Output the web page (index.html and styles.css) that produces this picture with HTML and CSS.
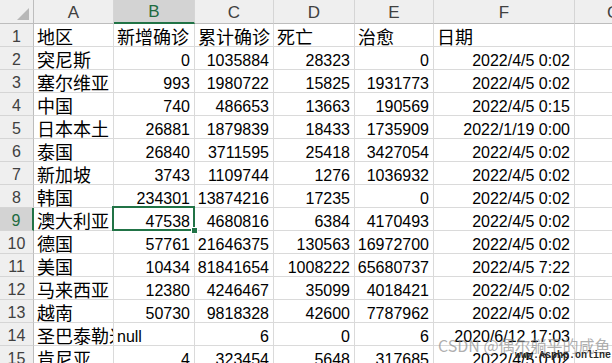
FILE: index.html
```html
<!DOCTYPE html>
<html lang="zh">
<head>
<meta charset="utf-8">
<link rel="stylesheet" href="styles.css">
</head>
<body>
<div class="wrap">
<div class="sheet">
  <div class="corner"><svg width="33" height="23" viewBox="0 0 33 23"><polygon points="29,8 29,20 17,20" fill="#b8b8b8"/></svg></div>
  <div class="ch">A</div><div class="ch ch-sel">B</div><div class="ch">C</div><div class="ch">D</div><div class="ch">E</div><div class="ch">F</div><div class="ch">G</div>

  <div class="rh">1</div><div class="c t">地区</div><div class="c t">新增确诊</div><div class="c t">累计确诊</div><div class="c t">死亡</div><div class="c t">治愈</div><div class="c t">日期</div><div class="c"></div>
  <div class="rh">2</div><div class="c t">突尼斯</div><div class="c n">0</div><div class="c n">1035884</div><div class="c n">28323</div><div class="c n">0</div><div class="c n">2022/4/5 0:02</div><div class="c"></div>
  <div class="rh">3</div><div class="c t">塞尔维亚</div><div class="c n">993</div><div class="c n">1980722</div><div class="c n">15825</div><div class="c n">1931773</div><div class="c n">2022/4/5 0:02</div><div class="c"></div>
  <div class="rh">4</div><div class="c t">中国</div><div class="c n">740</div><div class="c n">486653</div><div class="c n">13663</div><div class="c n">190569</div><div class="c n">2022/4/5 0:15</div><div class="c"></div>
  <div class="rh">5</div><div class="c t">日本本土</div><div class="c n">26881</div><div class="c n">1879839</div><div class="c n">18433</div><div class="c n">1735909</div><div class="c n">2022/1/19 0:00</div><div class="c"></div>
  <div class="rh">6</div><div class="c t">泰国</div><div class="c n">26840</div><div class="c n">3711595</div><div class="c n">25418</div><div class="c n">3427054</div><div class="c n">2022/4/5 0:02</div><div class="c"></div>
  <div class="rh">7</div><div class="c t">新加坡</div><div class="c n">3743</div><div class="c n">1109744</div><div class="c n">1276</div><div class="c n">1036932</div><div class="c n">2022/4/5 0:02</div><div class="c"></div>
  <div class="rh">8</div><div class="c t">韩国</div><div class="c n">234301</div><div class="c n">13874216</div><div class="c n">17235</div><div class="c n">0</div><div class="c n">2022/4/5 0:02</div><div class="c"></div>
  <div class="rh rh-sel">9</div><div class="c t">澳大利亚</div><div class="c n sel">47538</div><div class="c n">4680816</div><div class="c n">6384</div><div class="c n">4170493</div><div class="c n">2022/4/5 0:02</div><div class="c"></div>
  <div class="rh">10</div><div class="c t">德国</div><div class="c n">57761</div><div class="c n">21646375</div><div class="c n">130563</div><div class="c n">16972700</div><div class="c n">2022/4/5 0:02</div><div class="c"></div>
  <div class="rh">11</div><div class="c t">美国</div><div class="c n">10434</div><div class="c n">81841654</div><div class="c n">1008222</div><div class="c n">65680737</div><div class="c n">2022/4/5 7:22</div><div class="c"></div>
  <div class="rh">12</div><div class="c t">马来西亚</div><div class="c n">12380</div><div class="c n">4246467</div><div class="c n">35099</div><div class="c n">4018421</div><div class="c n">2022/4/5 0:02</div><div class="c"></div>
  <div class="rh">13</div><div class="c t">越南</div><div class="c n">50730</div><div class="c n">9818328</div><div class="c n">42600</div><div class="c n">7787962</div><div class="c n">2022/4/5 0:02</div><div class="c"></div>
  <div class="rh">14</div><div class="c t clip">圣巴泰勒米</div><div class="c l">null</div><div class="c n">6</div><div class="c n">0</div><div class="c n">6</div><div class="c n">2020/6/12 17:03</div><div class="c"></div>
  <div class="rh">15</div><div class="c t">肯尼亚</div><div class="c n">4</div><div class="c n">323454</div><div class="c n">5648</div><div class="c n">317685</div><div class="c n">2022/4/5 0:02</div><div class="c"></div>
</div>
<div class="wm">CSDN @偶尔躺平的咸鱼</div>
<div class="wm2">www.Asphp.online</div>
</div>
</body>
</html>
```

FILE: styles.css
```css
html, body {
  margin: 0;
  padding: 0;
  background: #ffffff;
  overflow: hidden;
}
.wrap {
  position: relative;
  width: 612px;
  height: 363px;
  overflow: hidden;
}
.sheet {
  display: grid;
  grid-template-columns: 34px 80px 81px 79px 81px 79px 141px 78px;
  grid-template-rows: 24px;
  grid-auto-rows: 23px;
  width: 653px;
  font-family: "Liberation Sans", Arial, sans-serif;
  font-size: 16px;
  color: #000;
}
.corner {
  background: #efefef;
  border-right: 1px solid #bdbdbd;
  border-bottom: 1px solid #bdbdbd;
  box-sizing: border-box;
  display: flex;
}
.corner svg { display: block; }
.ch {
  box-sizing: border-box;
  background: #efefef;
  border-right: 1px solid #d5d5d5;
  border-bottom: 1px solid #bdbdbd;
  display: flex;
  align-items: center;
  justify-content: center;
  padding-top: 2px;
  font-size: 17px;
  color: #404040;
}
.ch-sel {
  background: #d3d3d3;
  color: #1e6b41;
  border-bottom: 2px solid #217346;
}
.rh {
  box-sizing: border-box;
  background: #efefef;
  border-right: 1px solid #bdbdbd;
  border-bottom: 1px solid #d5d5d5;
  display: flex;
  align-items: center;
  justify-content: center;
  padding-top: 3px;
  font-size: 16px;
  color: #404040;
}
.rh-sel {
  background: #d3d3d3;
  color: #1e6b41;
  border-right: 2px solid #217346;
}
.c {
  box-sizing: border-box;
  border-right: 1px solid #dadada;
  border-bottom: 1px solid #dadada;
  display: flex;
  align-items: center;
  padding: 5px 4px 0 3px;
  white-space: nowrap;
  line-height: 18px;
}
.n { justify-content: flex-end; }
.l { justify-content: flex-start; }
.t {
  font-family: "Noto Sans CJK SC", "Liberation Sans", sans-serif;
  font-size: 18px;
  line-height: 18px;
  padding-top: 2px;
  padding-left: 3px;
}
.clip {
  overflow: hidden;
}
.sel {
  position: relative;
}
.sel::after {
  content: "";
  position: absolute;
  left: -2px;
  top: -2px;
  right: -1px;
  bottom: -1px;
  border: 2px solid #217346;
}
.sel::before {
  content: "";
  position: absolute;
  right: -4px;
  bottom: -4px;
  width: 5px;
  height: 5px;
  background: #217346;
  border: 1px solid #ffffff;
  z-index: 2;
}
.wm {
  position: absolute;
  left: 438px;
  top: 334px;
  font-family: "Noto Sans CJK SC", "Liberation Sans", sans-serif;
  font-size: 16px;
  line-height: 22px;
  color: rgba(140, 140, 140, 0.7);
  white-space: nowrap;
}
.wm2 {
  position: absolute;
  left: 515px;
  top: 350px;
  font-family: "Liberation Mono", monospace;
  font-size: 10px;
  font-weight: bold;
  color: #2a2a2a;
  white-space: nowrap;
}
```
